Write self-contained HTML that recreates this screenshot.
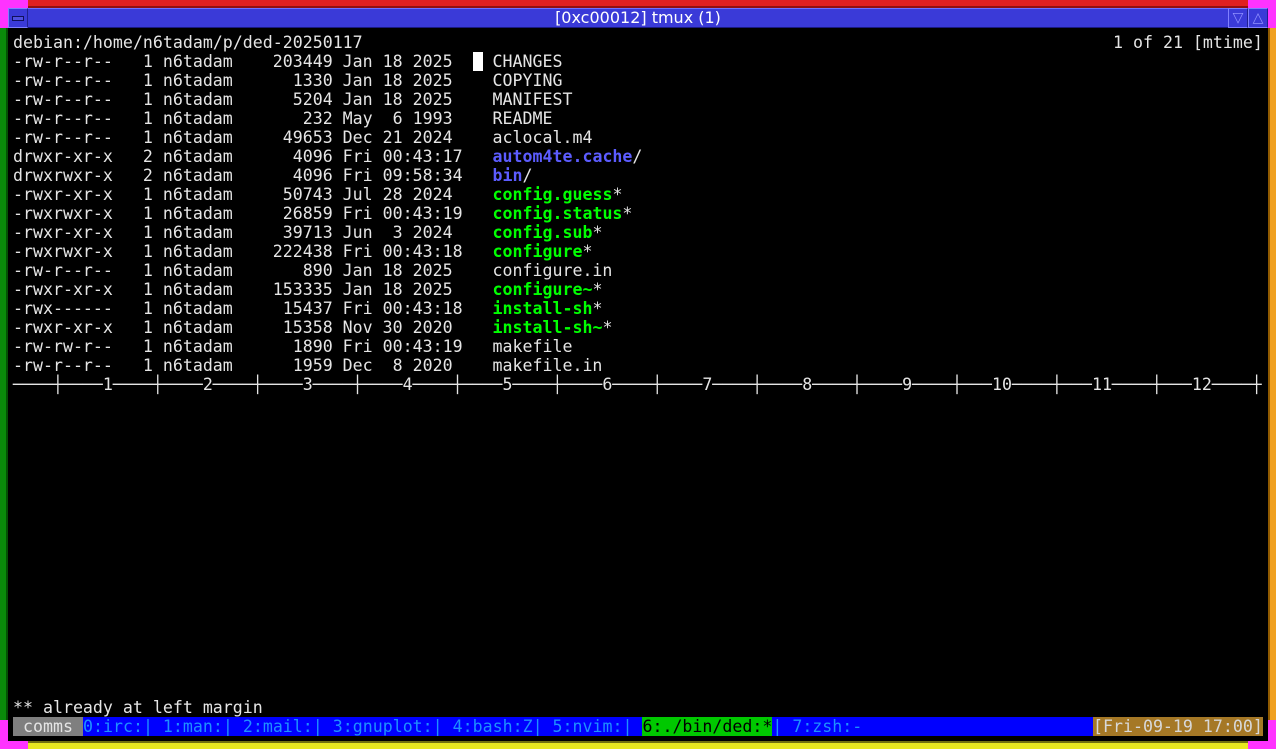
<!DOCTYPE html>
<html><head><meta charset="utf-8"><style>
html,body{margin:0;padding:0;background:#000;width:1276px;height:749px;overflow:hidden;position:relative}
div{position:absolute;box-sizing:border-box}
.t{font-family:"DejaVu Sans Mono","Liberation Mono",monospace;font-size:16.6px;line-height:19px;white-space:pre;color:#e5e5e5;left:13px}
.d{color:#5c5cff;font-weight:bold}
.x{color:#00ff00;font-weight:bold}
</style></head><body>
<div style="left:0;top:0;width:1276px;height:8px;background:#e02020;border-bottom:2px solid #901010"></div>
<div style="left:0;top:28px;width:8px;height:692px;background:#0a8a0a;border-right:2px solid #045004"></div>
<div style="left:1268px;top:28px;width:8px;height:692px;background:#f0a020;border-left:2px solid #905a00"></div>
<div style="left:0;top:741px;width:1276px;height:8px;background:#e8e820;border-top:2px solid #707010"></div>
<div style="left:0;top:0;width:28px;height:8px;background:#ff33ff"></div>
<div style="left:0;top:0;width:8px;height:28px;background:#ff33ff"></div>
<div style="left:1248px;top:0;width:28px;height:8px;background:#ff33ff"></div>
<div style="left:1268px;top:0;width:8px;height:28px;background:#ff33ff"></div>
<div style="left:0;top:741px;width:28px;height:8px;background:#ff33ff"></div>
<div style="left:0;top:720px;width:8px;height:29px;background:#ff33ff"></div>
<div style="left:1248px;top:741px;width:28px;height:8px;background:#ff33ff"></div>
<div style="left:1268px;top:720px;width:8px;height:29px;background:#ff33ff"></div>
<div style="left:8px;top:8px;width:1260px;height:20px;background:#3a3ad8;border-top:1px solid #7070ff;border-bottom:1px solid #1a1a80"></div>
<div style="left:8px;top:8px;width:20px;height:20px;border:1px solid #8080ff;border-right-color:#202090;background:#3a3ad8"></div>
<div style="left:12px;top:16px;width:12px;height:5px;border:1px solid #10105a;background:#5050e0"></div>
<div style="left:1228px;top:8px;width:20px;height:20px;border:1px solid #8080ff;border-right-color:#202090;background:#3a3ad8;color:#9090ff;font:14px 'DejaVu Sans';text-align:center;line-height:18px">▽</div>
<div style="left:1248px;top:8px;width:20px;height:20px;border:1px solid #8080ff;border-right-color:#202090;background:#3a3ad8;color:#9090ff;font:14px 'DejaVu Sans';text-align:center;line-height:18px">△</div>
<div style="left:0;top:8px;width:1276px;text-align:center;color:#fff;font:16px 'DejaVu Sans',sans-serif;line-height:19px">[0xc00012] tmux (1)</div>
<div class="t" style="top:33px">debian:/home/n6tadam/p/ded-20250117</div>
<div class="t" style="top:33px;left:1113px">1 of 21 [mtime]</div>
<div style="left:473px;top:52px;width:10px;height:19px;background:#fff"></div>
<div class="t" style="top:52px">-rw-r--r--   1 n6tadam    203449 Jan 18 2025    CHANGES
-rw-r--r--   1 n6tadam      1330 Jan 18 2025    COPYING
-rw-r--r--   1 n6tadam      5204 Jan 18 2025    MANIFEST
-rw-r--r--   1 n6tadam       232 May  6 1993    README
-rw-r--r--   1 n6tadam     49653 Dec 21 2024    aclocal.m4
drwxr-xr-x   2 n6tadam      4096 Fri 00:43:17   <span class="d">autom4te.cache</span>/
drwxrwxr-x   2 n6tadam      4096 Fri 09:58:34   <span class="d">bin</span>/
-rwxr-xr-x   1 n6tadam     50743 Jul 28 2024    <span class="x">config.guess</span>*
-rwxrwxr-x   1 n6tadam     26859 Fri 00:43:19   <span class="x">config.status</span>*
-rwxr-xr-x   1 n6tadam     39713 Jun  3 2024    <span class="x">config.sub</span>*
-rwxrwxr-x   1 n6tadam    222438 Fri 00:43:18   <span class="x">configure</span>*
-rw-r--r--   1 n6tadam       890 Jan 18 2025    configure.in
-rwxr-xr-x   1 n6tadam    153335 Jan 18 2025    <span class="x">configure~</span>*
-rwx------   1 n6tadam     15437 Fri 00:43:18   <span class="x">install-sh</span>*
-rwxr-xr-x   1 n6tadam     15358 Nov 30 2020    <span class="x">install-sh~</span>*
-rw-rw-r--   1 n6tadam      1890 Fri 00:43:19   makefile
-rw-r--r--   1 n6tadam      1959 Dec  8 2020    makefile.in
────┼────1────┼────2────┼────3────┼────4────┼────5────┼────6────┼────7────┼────8────┼────9────┼───10────┼───11────┼───12────┼</div>
<div class="t" style="top:698px">** already at left margin</div>
<div style="left:13px;top:717px;width:1250px;height:19px;background:#0000ff"></div>
<div class="t" style="top:717px;left:13px;background:#7f7f7f"> comms </div>
<div class="t" style="top:717px;left:83px;color:#1e90ff">0:irc:| 1:man:| 2:mail:| 3:gnuplot:| 4:bash:Z| 5:nvim:| <span style="background:#00c800;color:#000">6:./bin/ded:*</span>| 7:zsh:-</div>
<div class="t" style="top:717px;left:1093px;background:#a57826;color:#d8d8d8">[Fri-09-19 17:00]</div>
</body></html>
